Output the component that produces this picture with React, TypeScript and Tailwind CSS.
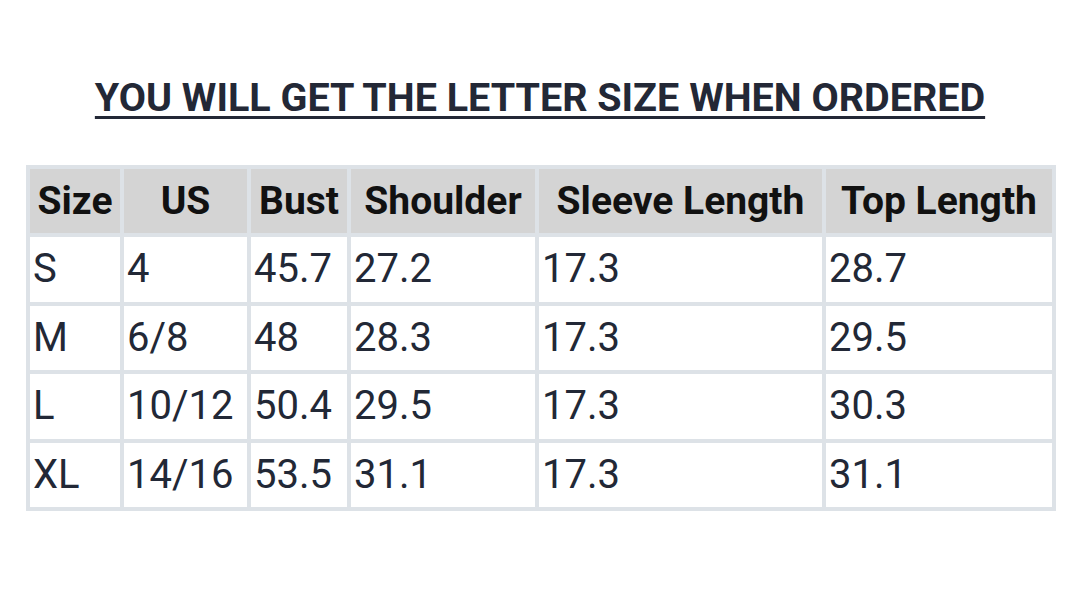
const headers = ['Size', 'US', 'Bust', 'Shoulder', 'Sleeve Length', 'Top Length']

const rows = [
  ['S', '4', '45.7', '27.2', '17.3', '28.7'],
  ['M', '6/8', '48', '28.3', '17.3', '29.5'],
  ['L', '10/12', '50.4', '29.5', '17.3', '30.3'],
  ['XL', '14/16', '53.5', '31.1', '17.3', '31.1'],
]

export default function App() {
  return (
    <div className="w-[1080px] h-[609px] bg-white font-['Roboto',sans-serif] pt-[76px]">
      <h2 className="text-center text-[39.5px] leading-[44px] font-bold text-[#232836] underline decoration-[3px] underline-offset-[5px]">
        YOU WILL GET THE LETTER SIZE WHEN ORDERED
      </h2>

      {/* size chart */}
      <div className="ml-[26px] mt-[45px] w-[1030px] grid grid-cols-[90px_123px_96px_184px_283px_226px] gap-[4px] p-[4px] bg-[#dde2e7]">
        {headers.map((h) => (
          <div
            key={h}
            className="h-[64px] bg-[#d4d4d4] flex items-center justify-center text-[39px] font-bold text-[#111] whitespace-nowrap"
          >
            {h}
          </div>
        ))}
        {rows.map((r) =>
          r.map((c, i) => (
            <div
              key={r[0] + i}
              className="h-[64.5px] bg-white flex items-center pl-[3px] text-[40px] text-[#222836] whitespace-nowrap"
            >
              {c}
            </div>
          )),
        )}
      </div>
    </div>
  )
}
